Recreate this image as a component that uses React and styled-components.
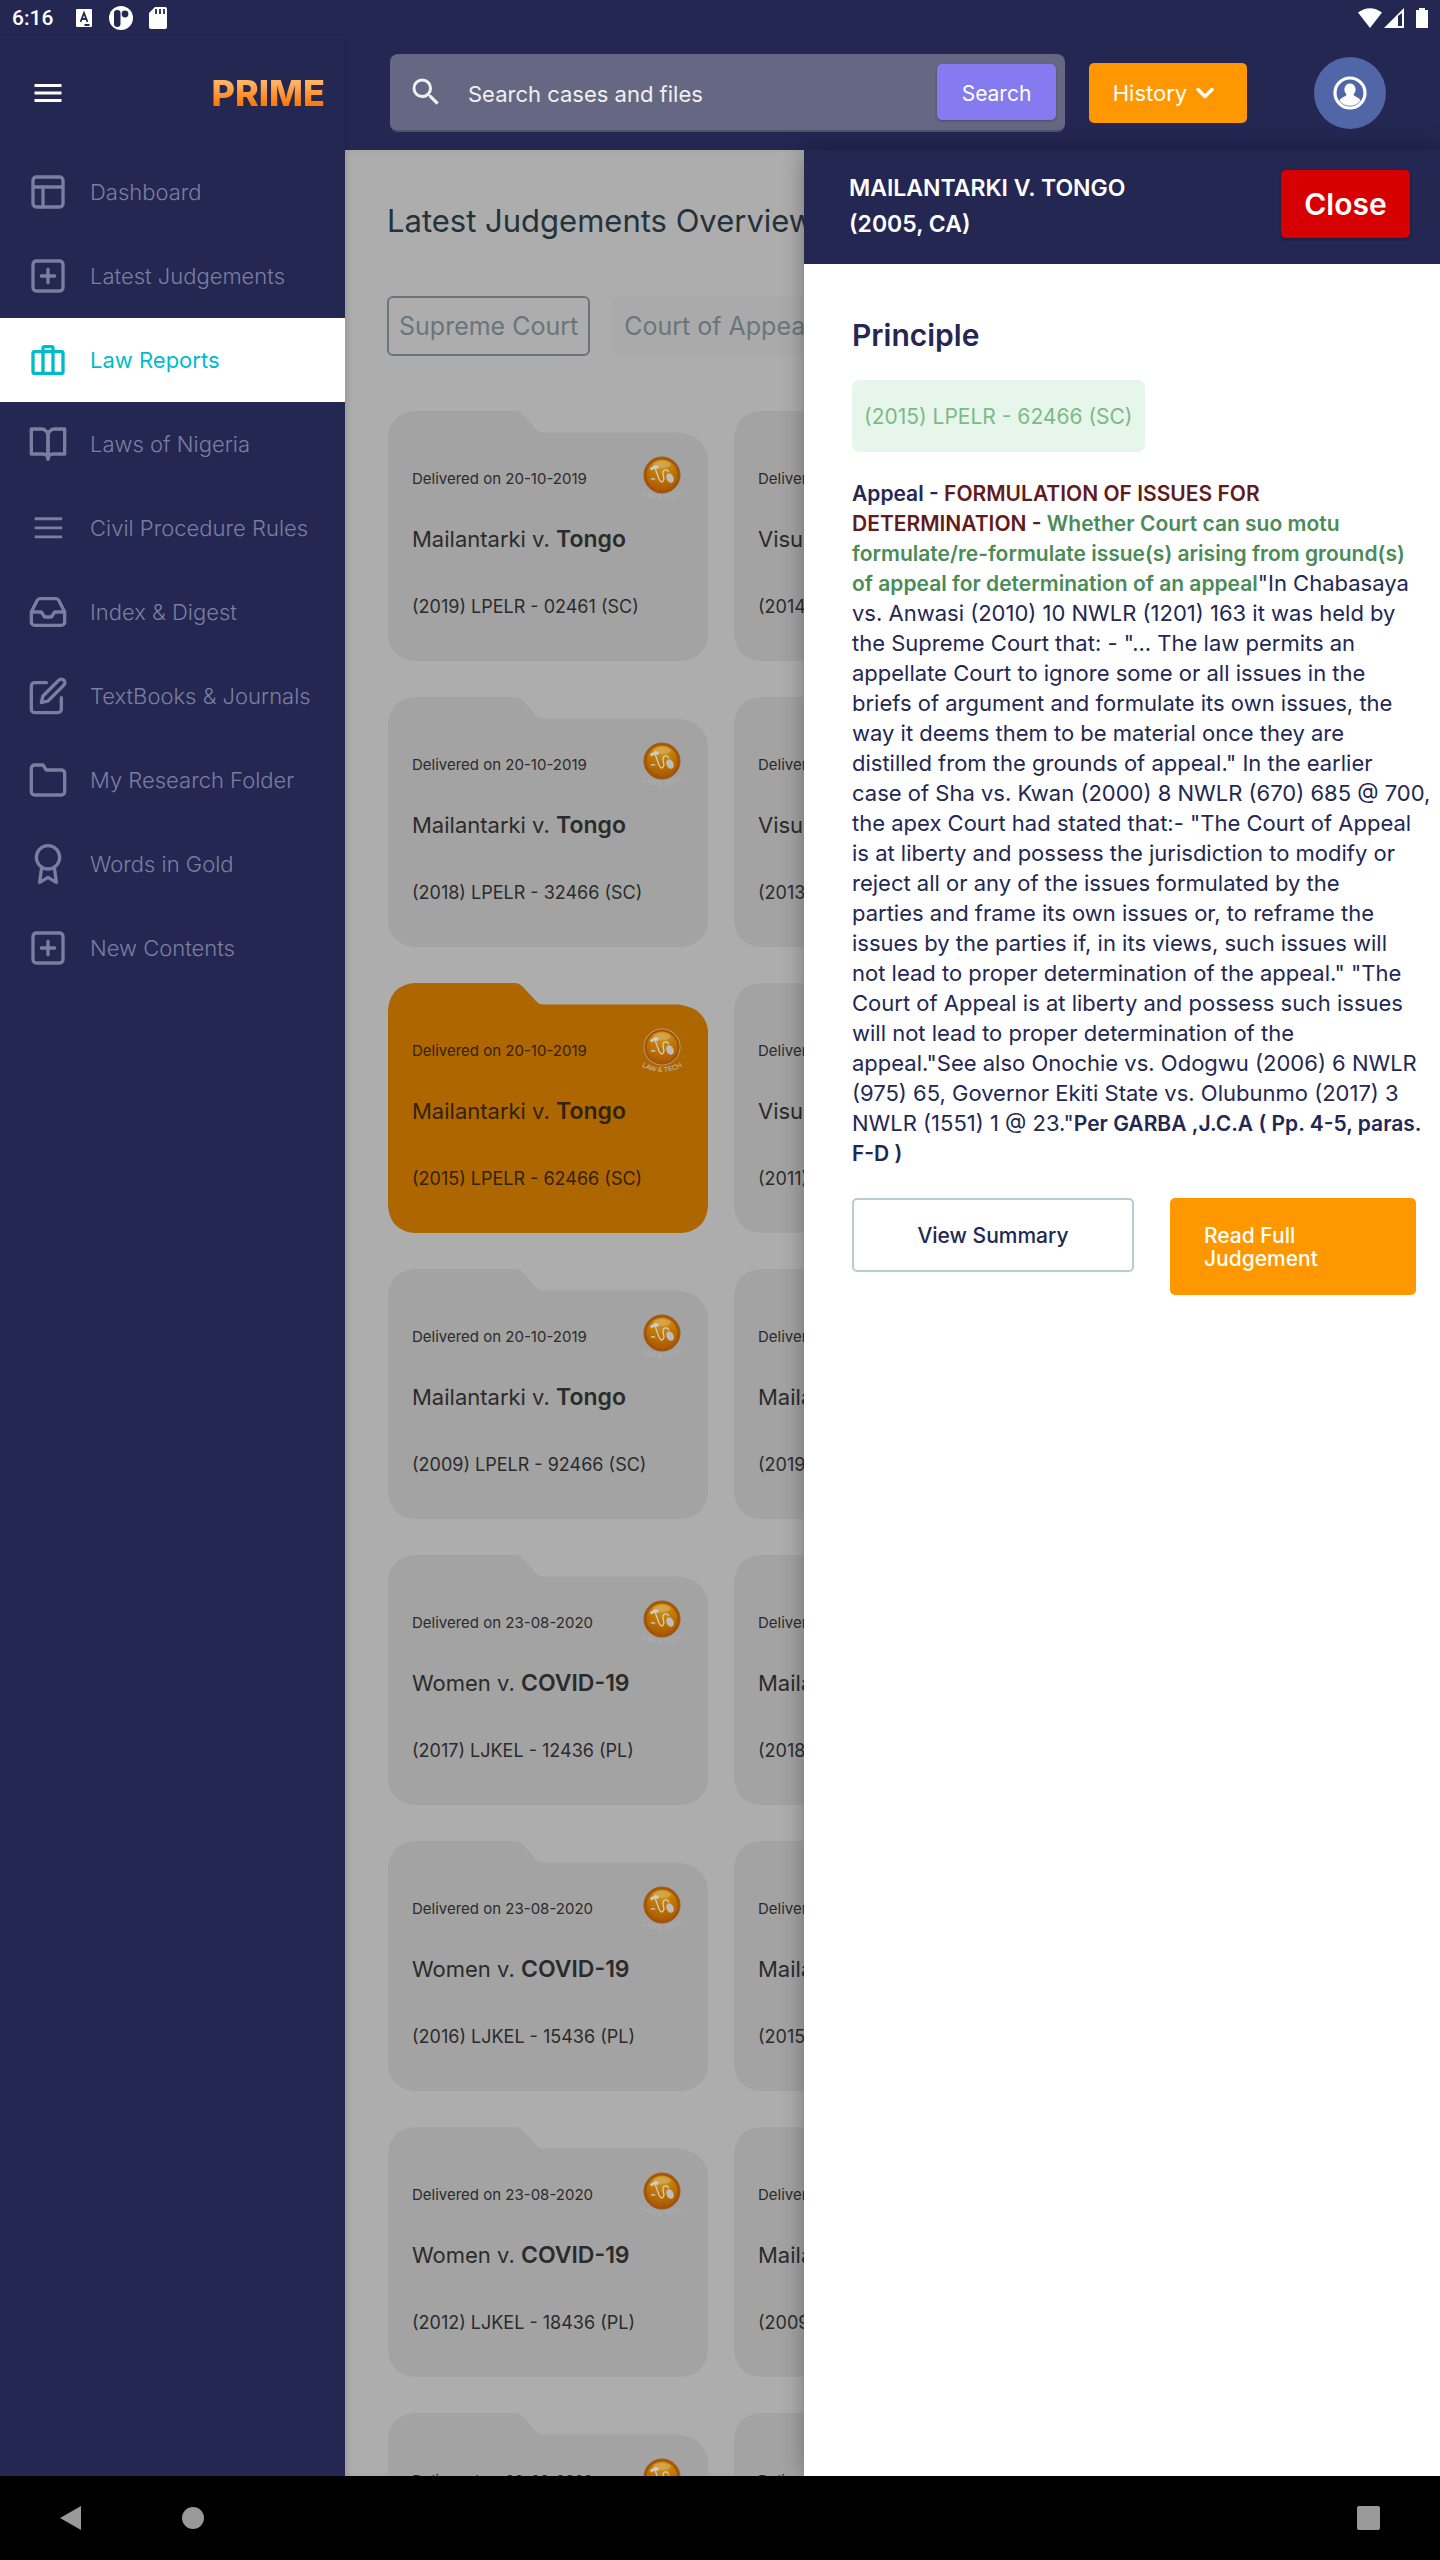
import React from "react";
import styled, { createGlobalStyle } from "styled-components";
import { MdMenu, MdSearch } from "react-icons/md";
import {
  FiLayout, FiPlusSquare, FiBookOpen, FiInbox, FiEdit, FiFolder, FiAward, FiChevronDown,
} from "react-icons/fi";

const navy = "#232752";

const GlobalStyle = createGlobalStyle`
  * { box-sizing: border-box; }
  body { margin: 0; background: #000; font-family: Inter, "Liberation Sans", sans-serif; color: ${navy}; }
  button, input { font: inherit; }
  button { cursor: pointer; }
  h1, h2, h3, p, ul { margin: 0; padding: 0; }
`;

const Shell = styled.div`
  display: flex;
  flex-direction: column;
  height: 100vh;
  overflow: hidden;
`;

const StatusBar = styled.div`
  display: flex;
  justify-content: space-between;
  align-items: center;
  height: 36px;
  flex: none;
  padding: 0 12px;
  background: ${navy};
  color: #fff;
  font: 500 21px Roboto, sans-serif;
`;
const StatusGroup = styled.div`
  display: flex;
  align-items: center;
  gap: ${(p) => p.$gap}px;
`;
const Clock = styled.span`
  margin-right: 7px;
`;

const TopBar = styled.header`
  display: flex;
  align-items: center;
  height: 114px;
  flex: none;
  background: ${navy};
`;
const Brand = styled.div`
  display: flex;
  align-items: center;
  justify-content: space-between;
  width: 345px;
  height: 100%;
  flex: none;
  padding: 0 20px 0 30px;
  box-shadow: 1px 0 2px rgba(0, 0, 0, 0.12);
`;
const IconButton = styled.button`
  display: flex;
  padding: 0;
  border: 0;
  background: none;
  color: #fff;
`;
const Wordmark = styled.span`
  font-size: 36px;
  font-weight: 800;
  background: linear-gradient(#ffb566 25%, #ff7a08 75%);
  -webkit-background-clip: text;
  background-clip: text;
  color: transparent;
`;
const SearchBox = styled.form`
  display: flex;
  align-items: center;
  flex: 1;
  height: 78px;
  margin-left: 45px;
  padding: 0 9px 0 18px;
  border-radius: 8px;
  border-bottom: 2px solid #50526a;
  background: #666883;
  color: #f0f0f0;
`;
const SearchInput = styled.input`
  flex: 1;
  min-width: 0;
  height: 56px;
  margin-left: 24px;
  padding: 3px 0 0;
  border: 0;
  outline: 0;
  background: none;
  color: inherit;
  font-size: 22px;
  &::placeholder { color: #f0f0f0; opacity: 1; }
`;
const SearchButton = styled.button`
  width: 119px;
  height: 56px;
  padding: 3px 0 0;
  border: 0;
  border-radius: 5px;
  background: #857aef;
  color: #fff;
  font-size: 21px;
  box-shadow: 0 1px 3px rgba(0, 0, 0, 0.3);
`;
const HistoryButton = styled.button`
  display: flex;
  align-items: center;
  justify-content: center;
  gap: 4px;
  width: 158px;
  height: 60px;
  margin-left: 24px;
  padding: 0 10px 0 6px;
  border: 0;
  border-radius: 5px;
  background: #ff9800;
  color: #fff;
  font-size: 22px;
`;
const Avatar = styled.button`
  display: flex;
  align-items: center;
  justify-content: center;
  width: 72px;
  height: 72px;
  margin: 0 54px 0 67px;
  padding: 0;
  border: 0;
  border-radius: 50%;
  background: #5166a6;
`;

const Body = styled.div`
  display: flex;
  flex: 1;
  min-height: 0;
  position: relative;
`;
const Sidebar = styled.nav`
  width: 345px;
  flex: none;
  background: ${navy};
`;
const MenuList = styled.ul`
  list-style: none;
`;
const MenuLink = styled.a`
  display: flex;
  align-items: center;
  gap: 22px;
  height: 84px;
  padding-left: 28px;
  font-size: 22px;
  font-weight: ${(p) => (p.$active ? 400 : 300)};
  text-decoration: none;
  white-space: nowrap;
  color: ${(p) => (p.$active ? "#00bccb" : "#7b7f9f")};
  background: ${(p) => (p.$active ? "#fff" : "none")};
  svg { flex: none; }
`;

const Content = styled.main`
  flex: 1;
  min-width: 0;
  overflow: hidden;
  padding: 50px 42px 0;
  background: #adadad;
  box-shadow: inset 4px 0 6px -2px rgba(0, 0, 0, 0.12);
`;
const PageTitle = styled.h1`
  color: #24323a;
  font-size: 31px;
  line-height: 42px;
  font-weight: 400;
`;
const Courts = styled.div`
  display: flex;
  gap: 22px;
  margin-top: 54px;
`;
const Court = styled.button`
  height: 60px;
  padding: 0 10px;
  border: 2px solid ${(p) => (p.$active ? "#69757d" : "transparent")};
  border-radius: 6px;
  background: ${(p) => (p.$active ? "none" : "#aaaaaa")};
  color: #69757d;
  font-size: 25px;
  white-space: nowrap;
`;
const CardGrid = styled.div`
  display: grid;
  grid-template-columns: repeat(2, 320px);
  gap: 36px 26px;
  margin: 55px 0 0 1px;
`;
const Card = styled.article`
  position: relative;
  height: 250px;
  padding: 45px 26px 0 24px;
  color: ${(p) => (p.$active ? "#33220c" : "#2b2b2b")};
`;
const FolderShape = styled.svg`
  position: absolute;
  inset: 0;
  width: 100%;
  height: 100%;
`;
const CardTop = styled.div`
  position: relative;
  display: flex;
  justify-content: space-between;
  height: 46px;
`;
const Delivered = styled.span`
  padding-top: 11px;
  font-size: 15px;
  line-height: 24px;
`;
const CaseName = styled.h3`
  position: relative;
  margin-top: 21px;
  font-size: 22px;
  line-height: 32px;
  font-weight: 400;
  b { font-size: 23px; font-weight: 600; }
`;
const Citation = styled.p`
  position: relative;
  margin-top: 40px;
  font-size: 18px;
  line-height: 24px;
`;

const Drawer = styled.aside`
  position: absolute;
  top: 0;
  right: 0;
  bottom: 0;
  width: 636px;
  background: #fff;
  box-shadow: 0 0 22px rgba(0, 0, 0, 0.32);
`;
const DrawerHead = styled.div`
  display: flex;
  align-items: flex-start;
  justify-content: space-between;
  height: 114px;
  padding: 20px 30px 0 45px;
  background: ${navy};
  color: #fff;
`;
const DrawerTitle = styled.h2`
  font-size: 23px;
  line-height: 36px;
  font-weight: 600;
`;
const CloseButton = styled.button`
  width: 129px;
  height: 68px;
  border: 0;
  border-radius: 5px;
  background: #d60000;
  color: #fff;
  font-size: 30px;
  font-weight: 600;
  box-shadow: 0 1px 3px rgba(0, 0, 0, 0.3);
`;
const DrawerBody = styled.div`
  padding: 50px 24px 0 48px;
`;
const Principle = styled.h2`
  font-size: 30px;
  line-height: 42px;
  font-weight: 600;
`;
const Tag = styled.span`
  display: inline-flex;
  align-items: center;
  height: 72px;
  margin-top: 24px;
  padding: 0 12px;
  border-radius: 8px;
  background: #e6f6ea;
  color: #7cba86;
  font-size: 21px;
`;
const Ruling = styled.p`
  margin: 26px -20px 0 0;
  font-size: 22px;
  line-height: 30px;
  b { font-size: 21px; font-weight: 600; line-height: 1; }
`;
const Subject = styled.b`
  color: #621b1b;
`;
const Question = styled.b`
  color: #4b8b57;
`;
const Actions = styled.div`
  display: flex;
  align-items: flex-start;
  justify-content: space-between;
  margin-top: 30px;
`;
const SummaryButton = styled.button`
  width: 282px;
  height: 74px;
  border: 2px solid #b9cbd4;
  border-radius: 5px;
  background: #fff;
  color: ${navy};
  font-size: 21px;
  font-weight: 500;
`;
const ReadButton = styled.button`
  width: 246px;
  height: 97px;
  padding: 0 90px 0 34px;
  border: 0;
  border-radius: 5px;
  background: #ff9800;
  color: #fff;
  font-size: 21px;
  line-height: 23px;
  font-weight: 500;
  text-align: left;
`;

const DeviceBar = styled.footer`
  display: flex;
  align-items: center;
  gap: 100px;
  height: 84px;
  flex: none;
  padding: 0 60px;
  background: #000;
  button:last-child { margin-left: auto; }
`;
const DeviceButton = styled.button`
  display: flex;
  padding: 0;
  border: 0;
  background: none;
`;

const Suitcase = ({ size }) => (
  <svg width={size} height={size} viewBox="0 0 24 24" fill="none" stroke="currentColor" strokeWidth="2" strokeLinejoin="round">
    <rect x="3" y="7" width="18" height="13" rx="1" />
    <path d="M9 20V5a1 1 0 0 1 1-1h4a1 1 0 0 1 1 1v15" />
  </svg>
);
const Lines = ({ size }) => (
  <svg width={size} height={size} viewBox="0 0 24 24" fill="currentColor">
    <path d="M4 5.6h16.500v1.700H4zM4 11.100h16.500v1.700H4zM4 16.500h16.500v1.700H4z" />
  </svg>
);

const Seal = ({ dim }) => (
  <svg width="40" height="48" viewBox="0 0 40 48" aria-hidden="true">
    <defs>
      <radialGradient id="sealFill" cx="50%" cy="20%" r="85%">
        <stop offset="0" stopColor="#d09a2c" />
        <stop offset="0.35" stopColor="#c27d05" />
        <stop offset="1" stopColor="#a44e00" />
      </radialGradient>
      <path id="sealArc" d="M-1 38 Q20 50 41 38" />
    </defs>
    <circle cx="20" cy="19" r="18" fill="url(#sealFill)" stroke={dim ? "#b7a690" : "#8f5a2c"} strokeWidth="1" />
    <circle cx="20" cy="19" r="16.500" fill="none" stroke="#a65300" strokeWidth="2" />
    <ellipse cx="20" cy="8.500" rx="9" ry="3.500" fill="#d8b368" opacity="0.55" />
    <path d="M8 12l5-3 4 1-1 3-3-.5-4 2zM8 23.500l2-1.500h2l2 1.500z" fill="#ccc" />
    <path d="M13 12l4 11q3 6 5 0l-1-5q0-5 4-4l2 2" fill="none" stroke="#ccc" strokeWidth="1.300" />
    <ellipse cx="28" cy="22" rx="3.500" ry="5" fill="#bdbdbd" transform="rotate(-25 28 22)" />
    <text fill={dim ? "#c9c1b6" : "#b0b0b0"} fontSize="7" fontFamily="Liberation Sans, sans-serif" textAnchor="middle">
      <textPath href="#sealArc" startOffset="50%">LAW &amp; TECH</textPath>
    </text>
  </svg>
);

const menu = [
  ["Dashboard", FiLayout],
  ["Latest Judgements", FiPlusSquare],
  ["Law Reports", Suitcase],
  ["Laws of Nigeria", FiBookOpen],
  ["Civil Procedure Rules", Lines],
  ["Index & Digest", FiInbox],
  ["TextBooks & Journals", FiEdit],
  ["My Research Folder", FiFolder],
  ["Words in Gold", FiAward],
  ["New Contents", FiPlusSquare],
];

const cases = [
  ["20-10-2019", "Mailantarki", "Tongo", "(2019) LPELR - 02461 (SC)"],
  ["20-10-2019", "Visual", "Tongo", "(2014) LPELR - 02461 (SC)"],
  ["20-10-2019", "Mailantarki", "Tongo", "(2018) LPELR - 32466 (SC)"],
  ["20-10-2019", "Visual", "Tongo", "(2013) LPELR - 32466 (SC)"],
  ["20-10-2019", "Mailantarki", "Tongo", "(2015) LPELR - 62466 (SC)", true],
  ["20-10-2019", "Visual", "Tongo", "(2011) LPELR - 62466 (SC)"],
  ["20-10-2019", "Mailantarki", "Tongo", "(2009) LPELR - 92466 (SC)"],
  ["20-10-2019", "Mailantarki", "Tongo", "(2019) LPELR - 92466 (SC)"],
  ["23-08-2020", "Women", "COVID-19", "(2017) LJKEL - 12436 (PL)"],
  ["23-08-2020", "Mailantarki", "Tongo", "(2018) LPELR - 12436 (SC)"],
  ["23-08-2020", "Women", "COVID-19", "(2016) LJKEL - 15436 (PL)"],
  ["23-08-2020", "Mailantarki", "Tongo", "(2015) LPELR - 15436 (SC)"],
  ["23-08-2020", "Women", "COVID-19", "(2012) LJKEL - 18436 (PL)"],
  ["23-08-2020", "Mailantarki", "Tongo", "(2009) LPELR - 18436 (SC)"],
  ["23-08-2020", "Women", "COVID-19", "(2010) LJKEL - 19436 (PL)"],
  ["23-08-2020", "Mailantarki", "Tongo", "(2008) LPELR - 19436 (SC)"],
];

function CaseCard({ date, first, second, citation, active }) {
  return (
    <Card $active={active}>
      <FolderShape viewBox="0 0 320 250" preserveAspectRatio="none" aria-hidden="true">
        <path
          fill={active ? "#ae6700" : "#a3a3a3"}
          d="M27 0H127Q131 0 134 3L148 18Q151 21.500 155 21.500H291Q301 23 308 27Q319 35 320 48V223Q318 248 293 250H27Q2 248 0 223V27Q2 2 27 0Z"
        />
      </FolderShape>
      <CardTop>
        <Delivered>Delivered on {date}</Delivered>
        <Seal dim={active} />
      </CardTop>
      <CaseName>{first} v. <b>{second}</b></CaseName>
      <Citation>{citation}</Citation>
    </Card>
  );
}

export default function App() {
  return (
    <Shell>
      <GlobalStyle />
      <StatusBar>
        <StatusGroup $gap={16}>
          <Clock>6:16</Clock>
          <svg width="17" height="20" viewBox="0 0 17 20">
            <rect y="1" width="16" height="18" rx="1" fill="#fff" />
            <path d="M4.500 14L8 5l3.500 9M5.800 11h4.400M8.500 17h5" fill="none" stroke={navy} strokeWidth="1.800" />
          </svg>
          <svg width="24" height="24" viewBox="0 0 24 24">
            <circle cx="12" cy="12" r="12" fill="#fff" />
            <rect x="5" y="4" width="6.500" height="17" rx="3.200" fill={navy} />
            <circle cx="16" cy="8" r="3.400" fill={navy} />
          </svg>
          <svg width="18" height="22" viewBox="0 0 18 22">
            <path d="M6 0h10a2 2 0 0 1 2 2v18a2 2 0 0 1-2 2H2a2 2 0 0 1-2-2V6z" fill="#fff" />
            <path d="M7 2v5M11 2v5M15 2v5" stroke={navy} strokeWidth="1.800" />
          </svg>
        </StatusGroup>
        <StatusGroup $gap={2}>
          <svg width="24" height="20" viewBox="0 0 24 20"><path d="M0 4.500Q12-4 24 4.500L12 20z" fill="#fff" /></svg>
          <svg width="30" height="20" viewBox="0 0 30 20">
            <path d="M0 20L20 0v20z" fill="#fff" />
            <path d="M14 8l4-3v13h-4z" fill={navy} />
          </svg>
          <svg width="12" height="20" viewBox="0 0 12 20"><path d="M3 0h6v2h3v18H0V2h3z" fill="#fff" /></svg>
        </StatusGroup>
      </StatusBar>

      <TopBar>
        <Brand>
          <IconButton aria-label="Menu"><MdMenu size={36} /></IconButton>
          <Wordmark>PRIME</Wordmark>
        </Brand>
        <SearchBox onSubmit={(e) => e.preventDefault()}>
          <MdSearch size={36} />
          <SearchInput aria-label="Search cases and files" placeholder="Search cases and files" />
          <SearchButton>Search</SearchButton>
        </SearchBox>
        <HistoryButton>History <FiChevronDown size={28} strokeWidth={3} /></HistoryButton>
        <Avatar aria-label="Account">
          <svg width="36" height="36" viewBox="0 0 36 36">
            <circle cx="18" cy="18" r="15" fill="none" stroke="#fff" strokeWidth="3.200" />
            <path d="M18 8.500a5.500 6 0 0 1 3.500 10.700q0 1.800 3 2.800 3 1 4 3.500a13 13 0 0 1-21 0q1-2.500 4-3.500 3-1 3-2.800A5.500 6 0 0 1 18 8.500z" fill="#fff" />
          </svg>
        </Avatar>
      </TopBar>

      <Body>
        <Sidebar>
          <MenuList>
            {menu.map(([label, Icon]) => (
              <li key={label}>
                <MenuLink href="#" $active={label === "Law Reports"}>
                  <Icon size={40} />
                  {label}
                </MenuLink>
              </li>
            ))}
          </MenuList>
        </Sidebar>

        <Content>
          <PageTitle>Latest Judgements Overview</PageTitle>
          <Courts>
            <Court $active>Supreme Court</Court>
            <Court>Court of Appeal</Court>
          </Courts>
          <CardGrid>
            {cases.map(([date, first, second, citation, active]) => (
              <CaseCard key={citation} date={date} first={first} second={second} citation={citation} active={active} />
            ))}
          </CardGrid>
        </Content>

        <Drawer>
          <DrawerHead>
            <DrawerTitle>MAILANTARKI V. TONGO<br />(2005, CA)</DrawerTitle>
            <CloseButton>Close</CloseButton>
          </DrawerHead>
          <DrawerBody>
            <Principle>Principle</Principle>
            <Tag>(2015) LPELR - 62466 (SC)</Tag>
            <Ruling>
              <b>Appeal - </b>
              <Subject>FORMULATION OF ISSUES FOR<br />DETERMINATION - </Subject>
              <Question>
                Whether Court can suo motu<br />formulate/re-formulate issue(s) arising from ground(s)<br />of
                appeal for determination of an appeal
              </Question>
              "In Chabasaya<br />
              vs. Anwasi (2010) 10 NWLR (1201) 163 it was held by<br />
              the Supreme Court that: - "... The law permits an<br />
              appellate Court to ignore some or all issues in the<br />
              briefs of argument and formulate its own issues, the<br />
              way it deems them to be material once they are<br />
              distilled from the grounds of appeal." In the earlier<br />
              case of Sha vs. Kwan (2000) 8 NWLR (670) 685 @ 700,<br />
              the apex Court had stated that:- "The Court of Appeal<br />
              is at liberty and possess the jurisdiction to modify or<br />
              reject all or any of the issues formulated by the<br />
              parties and frame its own issues or, to reframe the<br />
              issues by the parties if, in its views, such issues will<br />
              not lead to proper determination of the appeal." "The<br />
              Court of Appeal is at liberty and possess such issues<br />
              will not lead to proper determination of the<br />
              appeal."See also Onochie vs. Odogwu (2006) 6 NWLR<br />
              (975) 65, Governor Ekiti State vs. Olubunmo (2017) 3<br />
              NWLR (1551) 1 @ 23."<b>Per GARBA ,J.C.A ( Pp. 4-5, paras.<br />F-D )</b>
            </Ruling>
            <Actions>
              <SummaryButton>View Summary</SummaryButton>
              <ReadButton>Read Full Judgement</ReadButton>
            </Actions>
          </DrawerBody>
        </Drawer>
      </Body>

      <DeviceBar>
        <DeviceButton aria-label="Back"><svg width="22" height="24"><path d="M21 0v24L0 12z" fill="#999" /></svg></DeviceButton>
        <DeviceButton aria-label="Home"><svg width="22" height="22"><circle cx="11" cy="11" r="11" fill="#999" /></svg></DeviceButton>
        <DeviceButton aria-label="Recent apps"><svg width="23" height="24"><rect width="23" height="24" rx="2" fill="#999" /></svg></DeviceButton>
      </DeviceBar>
    </Shell>
  );
}
